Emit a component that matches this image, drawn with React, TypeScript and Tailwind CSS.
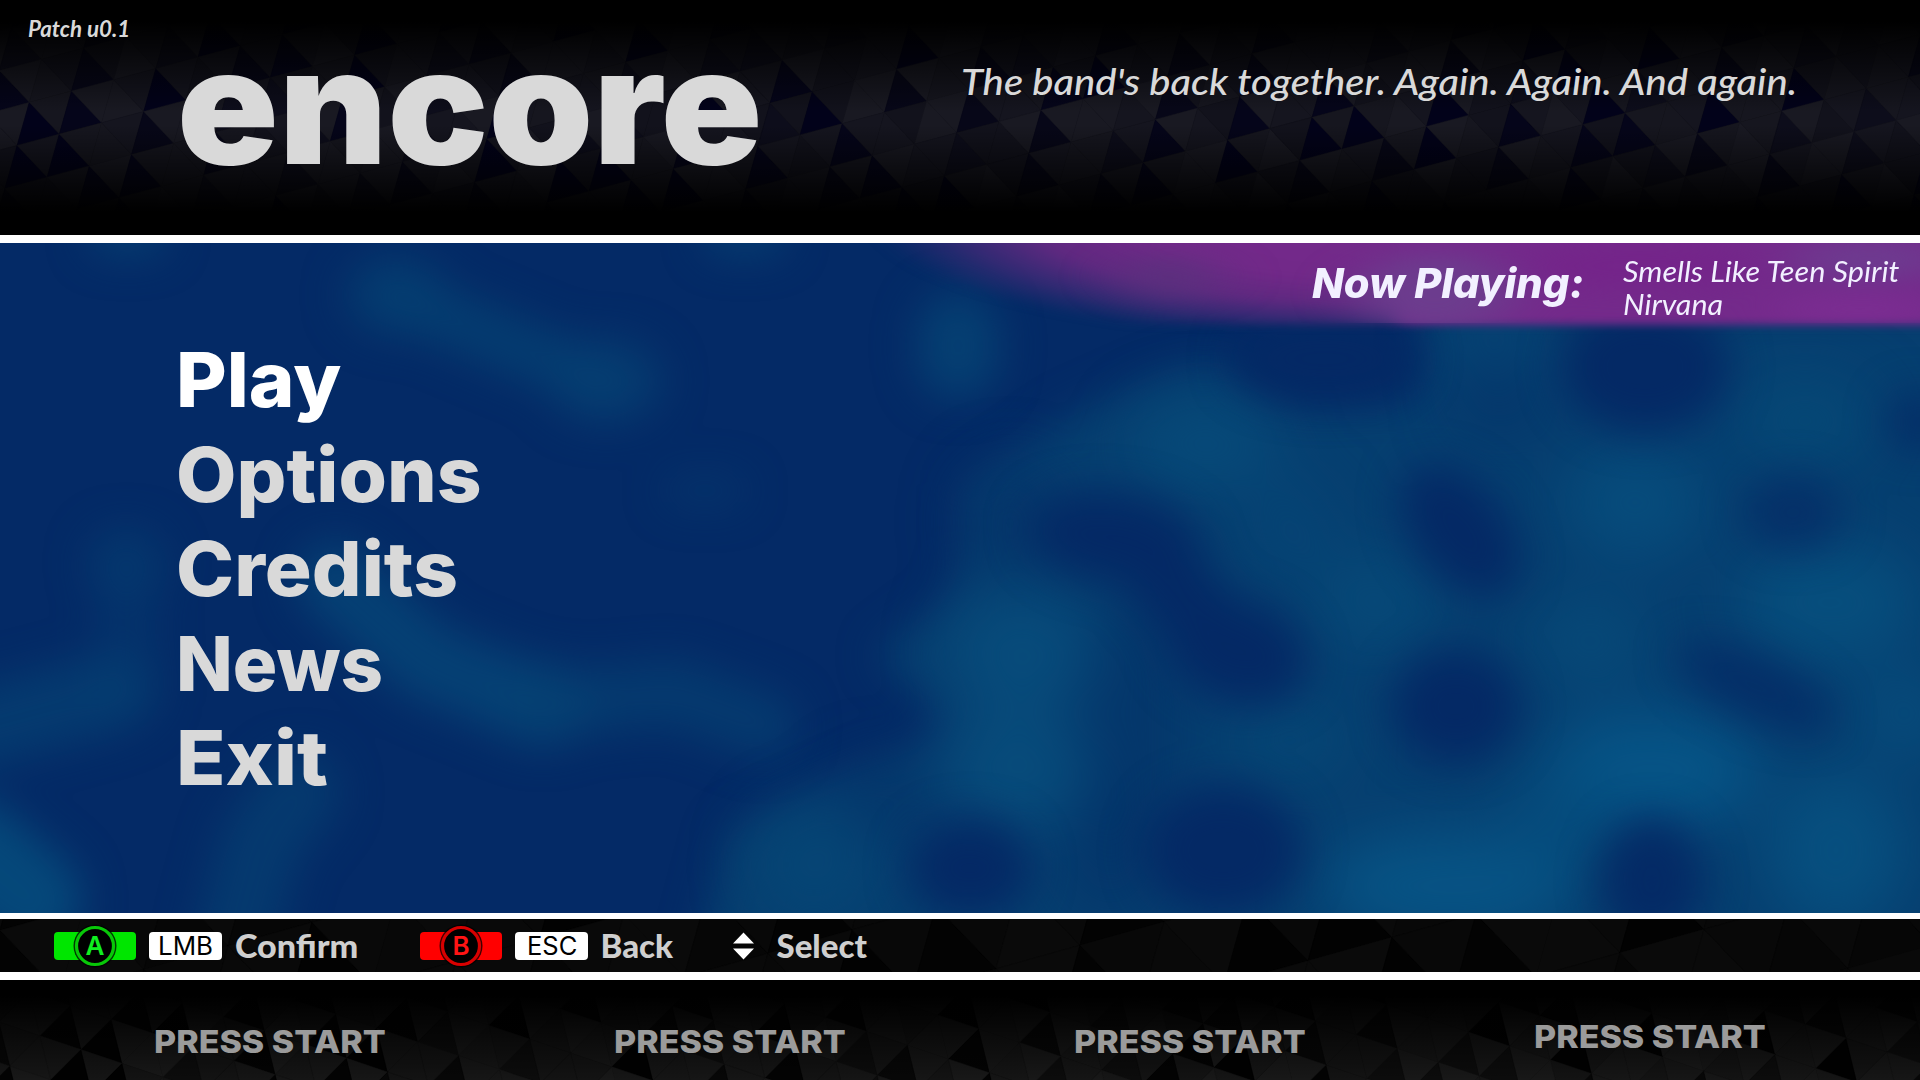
import { useLayoutEffect, useRef, useState } from "react";

type Vec = [number, number];

/** One line of text, condensed or widened to fill the width of its box. */
function FitText({ children, className }: { children: string; className: string }) {
  const box = useRef<HTMLDivElement>(null);
  const text = useRef<HTMLSpanElement>(null);
  const [scale, setScale] = useState(1);
  useLayoutEffect(() => {
    if (box.current && text.current) {
      setScale(box.current.clientWidth / text.current.offsetWidth);
    }
  }, []);
  return (
    <div ref={box} className={`shrink-0 whitespace-nowrap ${className}`}>
      <span ref={text} className="inline-block origin-left" style={{ transform: `scaleX(${scale})` }}>
        {children}
      </span>
    </div>
  );
}

function hash(i: number, j: number, k: number) {
  const v = Math.sin(i * 127.1 + j * 311.7 + k * 74.7) * 43758.5453;
  return v - Math.floor(v);
}

type TriProps = {
  height: number;
  origin: Vec;
  a: Vec;
  b: Vec;
  light: string[];
  dark: string[];
};

/** Skewed lattice of triangles in slightly different shades. */
function Triangles({ height, origin, a, b, light, dark }: TriProps) {
  const tris: { d: string; fill: string }[] = [];
  const det = a[0] * b[1] - a[1] * b[0];
  let iMin = Infinity, iMax = -Infinity, jMin = Infinity, jMax = -Infinity;
  for (const [cx, cy] of [[0, 0], [1920, 0], [0, height], [1920, height]]) {
    const x = cx - origin[0];
    const y = cy - origin[1];
    const i = (x * b[1] - y * b[0]) / det;
    const j = (a[0] * y - a[1] * x) / det;
    iMin = Math.min(iMin, Math.floor(i) - 1);
    iMax = Math.max(iMax, Math.ceil(i) + 1);
    jMin = Math.min(jMin, Math.floor(j) - 1);
    jMax = Math.max(jMax, Math.ceil(j) + 1);
  }
  for (let i = iMin; i <= iMax; i++) {
    for (let j = jMin; j <= jMax; j++) {
      const x = origin[0] + i * a[0] + j * b[0];
      const y = origin[1] + i * a[1] + j * b[1];
      if (y > height + 100 || y < -150 || x < -150 || x > 2070) continue;
      const far = `${x + a[0] + b[0]},${y + a[1] + b[1]}`;
      const phase = (((j * 2 + Math.floor(i / 2)) % 5) + 5) % 5;
      const isDark = phase === 0 || phase === 1 || (phase === 2 && hash(i, j, 1) < 0.6);
      const shade = hash(i, j, 3);
      const tone = light[Math.floor(hash(i, j, 2) * light.length)];
      tris.push({
        d: `${x},${y} ${x + a[0]},${y + a[1]} ${far}`,
        fill: isDark ? dark[Math.floor(shade * dark.length)] : tone,
      });
      tris.push({
        d: `${x},${y} ${x + b[0]},${y + b[1]} ${far}`,
        fill: light[Math.floor(hash(i, j, 4) * light.length)],
      });
    }
  }
  return (
    <svg className="absolute inset-0 h-full w-full" viewBox={`0 0 1920 ${height}`} preserveAspectRatio="none" aria-hidden>
      {tris.map((t, n) => (
        <polygon key={n} points={t.d} fill={t.fill} stroke={t.fill} strokeWidth="0.5" />
      ))}
    </svg>
  );
}

const GLOWS: [number, number, number, number, string, number][] = [
  [1205, 443, 75, 45, "#074b7a", 0.9],
  [1376, 602, 60, 50, "#074a79", 0.9],
  [1290, 530, 40, 50, "#064576", 0.9],
  [1635, 502, 70, 55, "#074e7d", 0.9],
  [1830, 602, 90, 60, "#07507e", 0.9],
  [1652, 770, 110, 60, "#065486", 1],
  [1450, 886, 130, 55, "#075384", 1],
  [1560, 820, 60, 50, "#064d7d", 0.9],
  [1836, 850, 70, 80, "#075181", 0.9],
  [1021, 650, 75, 60, "#074c7b", 0.95],
  [1015, 770, 75, 60, "#074c7b", 0.95],
  [1290, 740, 60, 40, "#064776", 0.9],
  [1493, 330, 55, 35, "#064474", 0.9],
  [1805, 420, 70, 45, "#064977", 0.9],
  [1905, 714, 50, 45, "#074d7c", 0.9],
  [1590, 640, 60, 45, "#074a79", 0.9],
  [814, 865, 60, 60, "#054676", 0.9],
];

const HOLES: [number, number, number, number, number, number][] = [
  [1115, 537, 88, 46, 8, 1],
  [1236, 650, 74, 52, 20, 1],
  [1180, 594, 60, 40, 40, 1],
  [1460, 530, 46, 76, -38, 1],
  [1645, 366, 84, 66, 0, 1],
  [1793, 512, 50, 38, 0, 0.7],
  [1755, 686, 86, 30, 25, 0.8],
  [1456, 706, 64, 58, 0, 1],
  [1223, 850, 80, 66, 0, 1],
  [970, 868, 62, 50, 0, 1],
  [1652, 880, 52, 62, 0, 0.95],
  [1918, 421, 32, 30, 0, 0.8],
  [1325, 358, 94, 42, 0, 1],
];

/** Softer dips that only partly darken the glow around them. */
const DIPS: [number, number, number, number][] = [
  [1130, 720, 50, 130],
  [1110, 850, 50, 70],
  [1010, 520, 50, 60],
  [890, 800, 60, 40],
  [1500, 400, 50, 40],
];

function Backdrop() {
  return (
    <svg className="absolute inset-0 h-full w-full" viewBox="0 242 1920 671" preserveAspectRatio="none" aria-hidden>
      <defs>
        <filter id="soft" x="-300" y="0" width="2600" height="1300" filterUnits="userSpaceOnUse" colorInterpolationFilters="sRGB">
          <feGaussianBlur stdDeviation="20" />
        </filter>
        <filter id="softer" x="-300" y="0" width="2600" height="1300" filterUnits="userSpaceOnUse" colorInterpolationFilters="sRGB">
          <feGaussianBlur stdDeviation="30" />
        </filter>
        <filter id="edge" x="500" y="0" width="1800" height="600" filterUnits="userSpaceOnUse" colorInterpolationFilters="sRGB">
          <feGaussianBlur stdDeviation="10 4.5" />
        </filter>
        <filter id="patch" x="500" y="0" width="1800" height="600" filterUnits="userSpaceOnUse" colorInterpolationFilters="sRGB">
          <feGaussianBlur stdDeviation="28 12" />
        </filter>
        <radialGradient id="banner" gradientUnits="userSpaceOnUse" cx="0" cy="0" r="1" gradientTransform="translate(1400 215) scale(530 128)">
          <stop offset="0" stopColor="#742a8b" />
          <stop offset="0.5" stopColor="#722989" />
          <stop offset="0.7" stopColor="#6c2984" stopOpacity="0.88" />
          <stop offset="0.85" stopColor="#602a80" stopOpacity="0.5" />
          <stop offset="1" stopColor="#502a7a" stopOpacity="0" />
        </radialGradient>
        <clipPath id="bannerClip">
          <rect x="1000" y="242" width="920" height="80" />
        </clipPath>
        <clipPath id="leftHalf">
          <rect x="700" y="200" width="700" height="124" />
        </clipPath>
      </defs>
      <rect x="0" y="242" width="1920" height="671" fill="#042a66" />
      <g filter="url(#soft)" fill="none" stroke="#053f72" strokeLinecap="round" strokeLinejoin="round">
        <path d="M392,294 L514,345 L606,382" strokeWidth="56" opacity="0.85" />
        <ellipse cx="396" cy="294" rx="30" ry="18" strokeWidth="46" opacity="0.6" />
        <ellipse cx="606" cy="380" rx="34" ry="18" strokeWidth="50" opacity="0.7" />
        <path d="M335,580 L428,662 L539,706" stroke="#054375" strokeWidth="78" opacity="0.9" />
        <ellipse cx="545" cy="704" rx="20" ry="14" stroke="#054678" strokeWidth="56" opacity="0.7" />
        <path d="M539,706 L673,692 L765,726" strokeWidth="66" opacity="0.75" />
        <path d="M-40,732 L110,692" strokeWidth="78" opacity="0.8" />
        <path d="M130,690 L125,560" strokeWidth="64" opacity="0.4" />
        <path d="M120,562 h14" strokeWidth="70" opacity="0.45" />
        <path d="M300,792 L262,840 L235,940" strokeWidth="80" opacity="0.75" />
        <path d="M-30,850 L30,900" stroke="#05487a" strokeWidth="104" />
        <path d="M958,332 v26" stroke="#053f72" strokeWidth="82" />
        <path d="M680,490 h50" strokeWidth="34" opacity="0.45" />
        <path d="M110,232 h36 M725,232 h40" strokeWidth="42" opacity="0.9" />
      </g>
      <path
        filter="url(#soft)"
        fill="#063f70"
        d="M690,980 L730,830 L850,775 L950,735 L930,700 L875,655 L950,600 L965,550 L965,485 L1070,415 L1160,375 L1210,360 L1290,400 L1420,400 L1425,300 L2000,300 L2000,980Z"
      />
      <g filter="url(#softer)">
        {DIPS.map(([cx, cy, rx, ry], n) => (
          <ellipse key={n} cx={cx} cy={cy} rx={rx} ry={ry} fill="#043168" opacity="0.6" />
        ))}
        {GLOWS.map(([cx, cy, rx, ry, fill, o], n) => (
          <ellipse key={n} cx={cx} cy={cy} rx={rx} ry={ry} fill={fill} opacity={o} />
        ))}
      </g>
      <g filter="url(#soft)">
        {HOLES.map(([cx, cy, rx, ry, rot, o], n) => (
          <ellipse key={n} cx={cx} cy={cy} rx={rx} ry={ry} fill="#042965" opacity={o} transform={`rotate(${rot} ${cx} ${cy})`} />
        ))}
      </g>
      <g filter="url(#edge)">
        <rect clipPath="url(#leftHalf)" x="700" y="200" width="700" height="124" fill="url(#banner)" />
        <rect x="1399" y="200" width="600" height="124" fill="#742a8b" />
      </g>
      <g clipPath="url(#bannerClip)">
        <g filter="url(#patch)">
          <ellipse cx="1170" cy="276" rx="50" ry="24" fill="#57337c" opacity="0.6" />
          <ellipse cx="1435" cy="292" rx="80" ry="40" fill="#6b3f8e" opacity="0.85" />
          <ellipse cx="1870" cy="258" rx="80" ry="20" fill="#6d3d90" opacity="0.9" />
          <ellipse cx="1860" cy="308" rx="90" ry="12" fill="#803096" opacity="0.8" />
          <ellipse cx="1640" cy="265" rx="120" ry="24" fill="#74238a" opacity="0.8" />
        </g>
      </g>
    </svg>
  );
}

function PadButton({ letter, color, ring, fill }: { letter: string; color: string; ring: string; fill: string }) {
  return (
    <svg className="h-[46px] w-[82px] shrink-0" viewBox="0 0 82 46" aria-label={letter}>
      <rect x="0" y="9" width="82" height="28" rx="4" fill={fill} />
      <circle cx="41" cy="23" r="21.5" fill="#000" opacity="0.75" />
      <circle cx="41" cy="23" r="18.5" fill="#000" stroke={ring} strokeWidth="3.2" />
      <text x="41" y="32" textAnchor="middle" fontFamily="Inter, sans-serif" fontWeight="600" fontSize="26" fill={color}>
        {letter}
      </text>
    </svg>
  );
}

function KeyCap({ children, fit }: { children: string; fit: string }) {
  return (
    <div className="flex h-7 w-[73px] shrink-0 items-center justify-center rounded bg-white font-['Inter',sans-serif] text-[25px] font-normal leading-7 text-black">
      <FitText className={fit}>{children}</FitText>
    </div>
  );
}

const MENU = [
  { label: "Play", cls: "w-[165px] text-white" },
  { label: "Options", cls: "w-[306px]" },
  { label: "Credits", cls: "w-[282px]" },
  { label: "News", cls: "w-[207px]" },
  { label: "Exit", cls: "w-[152px]" },
];

const PLAYERS = ["pt-0", "pt-0", "pt-0", "-mt-[5px]"];

export default function App() {
  return (
    <div className="flex h-[1080px] w-[1920px] flex-col overflow-hidden bg-black font-['Lato',sans-serif] text-[#d9d9d9]">
      <header className="relative h-[235px] shrink-0 overflow-hidden bg-black">
        <Triangles
          height={235}
          origin={[29.3, 102.3]}
          a={[-12.2, 43.1]}
          b={[42.2, -11.3]}
          light={["#191922", "#15151f", "#12121c", "#16161f"]}
          dark={["#02021a", "#05051a", "#070718", "#0d0d1b"]}
        />
        <div className="absolute inset-0 bg-[linear-gradient(to_bottom,#000_0,#000_22px,rgba(0,0,0,0)_112px,rgba(0,0,0,0)_125px,#000_212px)]" />
        <div className="relative flex h-full items-start">
          <div className="w-[961px] shrink-0">
            <FitText className="ml-7 mt-[14px] h-7 w-[102px] text-[23px] font-bold italic leading-7">Patch u0.1</FitText>
            <FitText className="ml-[177px] mt-[-34px] h-[196px] w-[585px] font-['Inter',sans-serif] text-[161px] font-black leading-[196px]">
              encore
            </FitText>
          </div>
          <FitText className="mt-[59px] w-[836px] text-[37px] font-medium italic leading-[44px]">
            The band's back together. Again. Again. And again.
          </FitText>
        </div>
      </header>

      <div className="h-[8px] shrink-0 bg-white" />

      <main className="relative flex h-[670px] shrink-0 items-start justify-between overflow-hidden">
        <Backdrop />
        <nav className="relative ml-[176px] mt-[89px] flex flex-col font-['Inter',sans-serif] text-[76px] font-extrabold leading-[94.6px]">
          {MENU.map((m) => (
            <FitText key={m.label} className={m.cls}>
              {m.label}
            </FitText>
          ))}
        </nav>
        <div className="relative mr-[20px] mt-[12px] flex text-[#f2f0ff]">
          <FitText className="mr-[39px] mt-[3px] w-[272px] font-['Inter',sans-serif] text-[41px] font-extrabold italic leading-[50px]">
            Now Playing:
          </FitText>
          <div className="w-[277px] text-[28px] italic leading-[32.5px]">
            <FitText className="w-[277px]">Smells Like Teen Spirit</FitText>
            <FitText className="w-[100px]">Nirvana</FitText>
          </div>
        </div>
      </main>

      <div className="h-[6px] shrink-0 bg-white" />

      <section className="relative h-[53px] shrink-0 overflow-hidden bg-[#050505]">
        <Triangles
          height={53}
          origin={[1392, 18.3]}
          a={[-24, 86]}
          b={[84, -23.5]}
          light={["#0a0a0a", "#090909", "#080808"]}
          dark={["#020202", "#030303", "#060606"]}
        />
        <div className="relative flex h-[53px] items-center pl-[54px] text-[33px] font-black leading-[53px] text-[#cfcfcf]">
          <PadButton letter="A" color="#10f020" ring="#08c808" fill="#00e600" />
          <div className="w-[12.5px]" />
          <KeyCap fit="w-[55px]">LMB</KeyCap>
          <FitText className="ml-[13px] w-[123px]">Confirm</FitText>
          <div className="w-[62px]" />
          <PadButton letter="B" color="#ff1414" ring="#d80000" fill="#ff0000" />
          <div className="w-[13.5px]" />
          <KeyCap fit="w-[50px]">ESC</KeyCap>
          <FitText className="ml-[12.5px] w-[73px]">Back</FitText>
          <svg className="ml-[59px] h-7 w-[21px] shrink-0" viewBox="0 0 21 28" fill="#fff" aria-hidden>
            <path d="M10.5 0.5 21 11.5H0ZM10.5 27.5 21 16.5H0Z" />
          </svg>
          <FitText className="ml-[23px] w-[90px]">Select</FitText>
        </div>
      </section>

      <div className="h-[8px] shrink-0 bg-white" />

      <footer className="relative h-[100px] shrink-0 overflow-hidden bg-black">
        <Triangles
          height={100}
          origin={[111, 39.3]}
          a={[10.8, 44]}
          b={[-41, -13.8]}
          light={["#181818", "#151515", "#131313", "#161616"]}
          dark={["#010101", "#030303", "#070707", "#0c0c0c"]}
        />
        <div className="absolute inset-0 bg-[linear-gradient(to_bottom,#000_0,#000_16px,rgba(0,0,0,0)_100px)]" />
        <div className="relative ml-10 grid w-[1840px] grid-cols-4 pt-[42px] font-['Inter',sans-serif] text-[31.5px] font-extrabold leading-10 text-[#9b9b9b]">
          {PLAYERS.map((shift, n) => (
            <div key={n} className={`flex justify-center ${shift}`}>
              <FitText className="w-[232px]">PRESS START</FitText>
            </div>
          ))}
        </div>
      </footer>
    </div>
  );
}
